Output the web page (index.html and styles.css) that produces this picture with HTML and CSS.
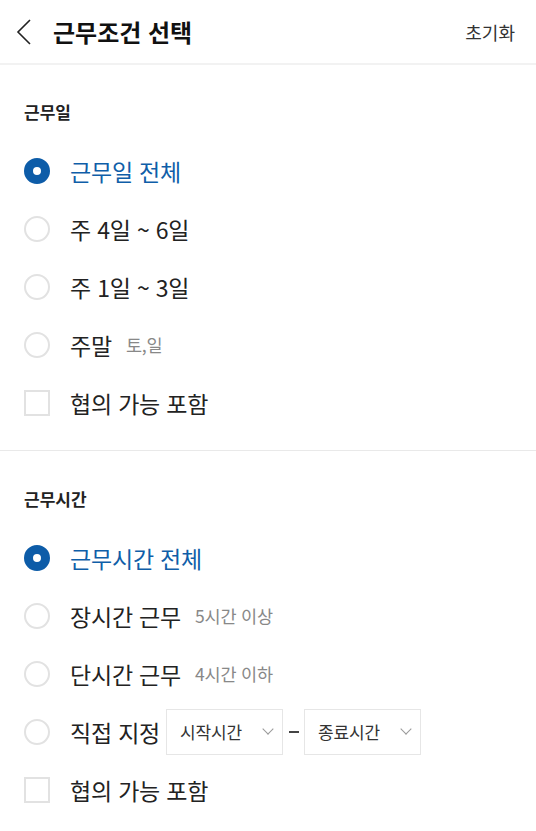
FILE: index.html
```html
<!DOCTYPE html>
<html lang="ko">
<head>
    <meta charset="UTF-8">
    <meta name="viewport" content="width=device-width, initial-scale=1.0">
    <title>근무조건 선택</title>
    <link rel="stylesheet" href="styles.css">
</head>
<body>
    <header class="topbar">
        <button class="back" aria-label="뒤로">
            <svg width="16" height="26" viewBox="0 0 16 26">
                <path d="M14 1 L2 13 L14 25" fill="none" stroke="#222" stroke-width="1.6"/>
            </svg>
        </button>
        <h1>근무조건 선택</h1>
        <button class="reset">초기화</button>
    </header>

    <section class="group">
        <h2>근무일</h2>
        <ul class="options">
            <li class="on"><span class="radio"></span>근무일 전체</li>
            <li><span class="radio"></span>주 4일 ~ 6일</li>
            <li><span class="radio"></span>주 1일 ~ 3일</li>
            <li><span class="radio"></span>주말<span class="sub">토,일</span></li>
            <li><span class="check"></span>협의 가능 포함</li>
        </ul>
    </section>

    <section class="group">
        <h2>근무시간</h2>
        <ul class="options">
            <li class="on"><span class="radio"></span>근무시간 전체</li>
            <li><span class="radio"></span>장시간 근무<span class="sub">5시간 이상</span></li>
            <li><span class="radio"></span>단시간 근무<span class="sub">4시간 이하</span></li>
            <li>
                <span class="radio"></span>직접 지정
                <div class="range">
                    <div class="select">시작시간<i></i></div>
                    <span class="dash"></span>
                    <div class="select">종료시간<i></i></div>
                </div>
            </li>
            <li><span class="check"></span>협의 가능 포함</li>
        </ul>
    </section>
</body>
</html>
```

FILE: styles.css
```css
*{
    margin: 0;
    padding: 0;
    box-sizing: border-box;
}
body{
    font-family: "Noto Sans CJK KR", "Noto Sans", sans-serif;
    color: #222;
    background: #fff;
}
button{
    background: none;
    border: none;
    font-family: inherit;
    cursor: pointer;
}

.topbar{
    display: flex;
    align-items: center;
    height: 65px;
    padding: 0 21px 0 16px;
    border-bottom: 2px solid #f2f2f2;
}
.topbar .back{
    display: flex;
    width: 16px;
    height: 26px;
    margin-right: 21px;
}
.topbar h1{
    flex: 1;
    font-size: 24px;
    font-weight: 700;
    line-height: 30px;
    color: #111;
}
.topbar .reset{
    font-size: 18px;
    color: #333;
}

.group{
    padding: 35px 0 18px 24px;
}
.group + .group{
    border-top: 1px solid #e9e9e9;
    padding-top: 36px;
}
.group h2{
    font-size: 17px;
    font-weight: 700;
    line-height: 24px;
    margin-bottom: 18px;
}

.options{
    list-style: none;
}
.options li{
    display: flex;
    align-items: center;
    height: 58px;
    font-size: 23px;
    line-height: 30px;
    letter-spacing: -0.2px;
    color: #222;
}
.options li.on{
    color: #0f5ea8;
}
.radio, .check{
    flex: none;
    width: 26px;
    height: 26px;
    margin-right: 20px;
    border: 2px solid #e2e2e2;
}
.radio{
    border-radius: 50%;
}
.on .radio{
    border: 9px solid #0d5ca8;
}
.sub{
    font-size: 17.5px;
    color: #888;
    margin-left: 14px;
}

.range{
    display: flex;
    align-items: center;
    margin-left: 6px;
}
.select{
    display: flex;
    align-items: center;
    justify-content: space-between;
    width: 117px;
    height: 46px;
    padding: 0 10px 0 13px;
    border: 1px solid #e6e6e6;
    font-size: 17px;
    color: #333;
}
.select i{
    width: 8px;
    height: 8px;
    border-right: 1px solid #999;
    border-bottom: 1px solid #999;
    transform: translateY(-3px) rotate(45deg);
}
.dash{
    width: 10px;
    height: 2px;
    margin: 0 5px 0 6px;
    background: #444;
}
```
